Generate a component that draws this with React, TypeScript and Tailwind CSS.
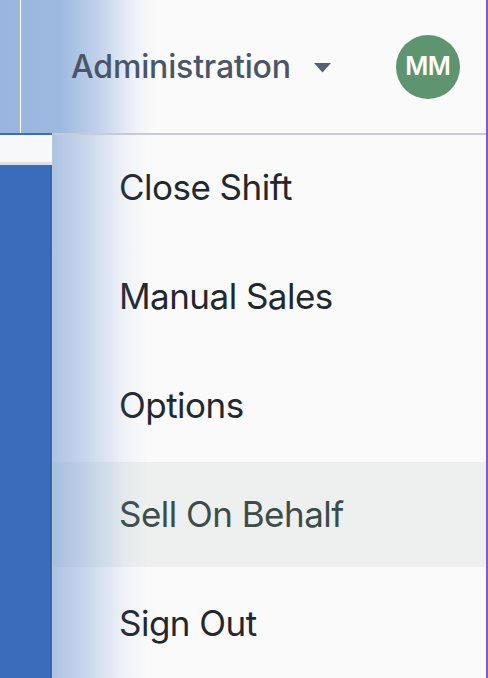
const items = ["Close Shift", "Manual Sales", "Options", "Sell On Behalf", "Sign Out"];

export default function App() {
  return (
    <div className="w-[488px] h-[678px] flex flex-col overflow-hidden bg-[#fafafa] border-r-2 border-[#7b5cd6] font-['Inter',sans-serif]">
      {/* Header */}
      <div className="h-[133px] shrink-0 flex items-center bg-[linear-gradient(to_right,#9ab6de_0px,#9db9df_60px,#c3d3eb_100px,#eef2f9_135px,#fafafa_155px)]">
        <div className="w-[21px] h-full border-r border-white" />
        <div className="ml-[50px] flex items-center">
          <span className="text-[32px] font-medium text-[#4a5567] tracking-[-0.005em]">Administration</span>
          <svg className="ml-[23px] mt-[2px]" width="17" height="10" viewBox="0 0 17 10">
            <path d="M0 0 L17 0 L8.5 9.5 Z" fill="#566070" />
          </svg>
        </div>
        <div className="ml-[65px] w-[64px] h-[64px] rounded-full bg-[#5e9470] flex items-center justify-center">
          <span className="text-[25px] font-semibold text-white tracking-[-0.02em]">MM</span>
        </div>
      </div>

      {/* Body */}
      <div className="flex-1 flex min-h-0">
        <div className="w-[52px] shrink-0 flex flex-col border-t-2 border-[#3a6dbd]">
          <div className="h-[30px] bg-[#f7f8f9] border-b-[3px] border-[#dcdfe3]" />
          <div className="flex-1 bg-[#3a6cbc] border-r-2 border-[#3364b0]" />
        </div>
        <div className="relative flex-1 flex flex-col gap-[4px] border-t-2 border-[#c8ccd2] border-l border-l-[#b9c6d8]">
          {items.map((item) => {
            const active = item === "Sell On Behalf";
            return (
              <div
                key={item}
                className={
                  "h-[105px] shrink-0 flex items-center pl-[66px] text-[35px] tracking-[-0.015em] " +
                  (active ? "bg-[#edf0ef] text-[#3d4c4a]" : "text-[#23272e]")
                }
              >
                {item}
              </div>
            );
          })}
          <div className="pointer-events-none absolute inset-y-0 left-0 w-[95px] bg-[linear-gradient(to_right,rgba(110,150,210,0.55),rgba(110,150,210,0.35)_35%,rgba(110,150,210,0.08)_75%,rgba(110,150,210,0))]" />
        </div>
      </div>
    </div>
  );
}
